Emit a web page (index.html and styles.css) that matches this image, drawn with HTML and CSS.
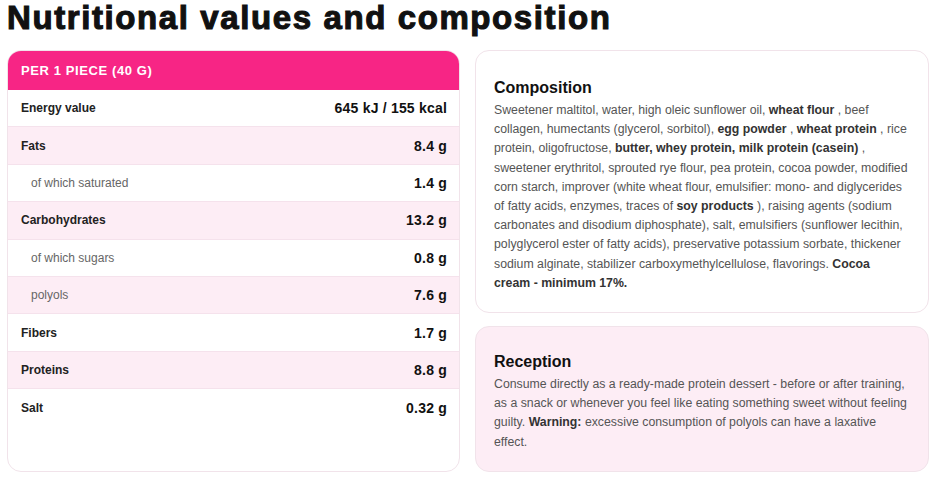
FILE: index.html
```html
<!DOCTYPE html>
<html>
<head>
<meta charset="utf-8">
<link rel="stylesheet" href="styles.css">
</head>
<body>
<h1 class="title">Nutritional values and composition</h1>
<div class="layout">
  <div class="card table-card">
    <div class="table-head">PER 1 PIECE (40 G)</div>
    <div class="row"><span class="label">Energy value</span><span class="value">645 kJ / 155 kcal</span></div>
    <div class="row alt"><span class="label">Fats</span><span class="value">8.4 g</span></div>
    <div class="row sub"><span class="label">of which saturated</span><span class="value">1.4 g</span></div>
    <div class="row alt"><span class="label">Carbohydrates</span><span class="value">13.2 g</span></div>
    <div class="row sub"><span class="label">of which sugars</span><span class="value">0.8 g</span></div>
    <div class="row alt sub"><span class="label">polyols</span><span class="value">7.6 g</span></div>
    <div class="row"><span class="label">Fibers</span><span class="value">1.7 g</span></div>
    <div class="row alt"><span class="label">Proteins</span><span class="value">8.8 g</span></div>
    <div class="row last"><span class="label">Salt</span><span class="value">0.32 g</span></div>
  </div>
  <div class="side">
    <div class="card info-card">
      <h2 class="info-title">Composition</h2>
      <p class="info-text">Sweetener maltitol, water, high oleic sunflower oil, <b>wheat flour</b> , beef<br>collagen, humectants (glycerol, sorbitol), <b>egg powder</b> , <b>wheat protein</b> , rice<br>protein, oligofructose, <b>butter, whey protein, milk protein (casein)</b> ,<br>sweetener erythritol, sprouted rye flour, pea protein, cocoa powder, modified<br>corn starch, improver (white wheat flour, emulsifier: mono- and diglycerides<br>of fatty acids, enzymes, traces of <b>soy products</b> ), raising agents (sodium<br>carbonates and disodium diphosphate), salt, emulsifiers (sunflower lecithin,<br>polyglycerol ester of fatty acids), preservative potassium sorbate, thickener<br>sodium alginate, stabilizer carboxymethylcellulose, flavorings. <b>Cocoa<br>cream - minimum 17%.</b></p>
    </div>
    <div class="card info-card pink">
      <h2 class="info-title">Reception</h2>
      <p class="info-text">Consume directly as a ready-made protein dessert - before or after training,<br>as a snack or whenever you feel like eating something sweet without feeling<br>guilty. <b>Warning:</b> excessive consumption of polyols can have a laxative<br>effect.</p>
    </div>
  </div>
</div>
</body>
</html>
```
FILE: styles.css
```css
html, body {
  margin: 0;
  padding: 0;
  background: #ffffff;
}
body {
  padding: 0 8px 0 7px;
  font-family: "Liberation Sans", Arial, sans-serif;
}
.title {
  margin: 0;
  height: 36px;
  font-size: 33px;
  line-height: 36px;
  font-weight: 700;
  color: #111111;
  letter-spacing: 1.6px;
  white-space: nowrap;
  -webkit-text-stroke: 1.1px #111111;
}
.layout {
  margin-top: 14px;
  display: grid;
  grid-template-columns: 453px 454px;
  column-gap: 15px;
  height: 422px;
}
.card {
  border: 1px solid #f1e3ea;
  border-radius: 14px;
  background: #ffffff;
  overflow: hidden;
  box-sizing: border-box;
}
.table-card {
  display: flex;
  flex-direction: column;
}
.table-head {
  background: #f72585;
  color: #ffffff;
  font-weight: 700;
  font-size: 13px;
  height: 39px;
  display: flex;
  align-items: center;
  padding-left: 13px;
  letter-spacing: 0.6px;
}
.row {
  height: 37.4px;
  box-sizing: border-box;
  display: flex;
  justify-content: space-between;
  align-items: center;
  padding: 0 12px 0 13px;
  border-bottom: 1px solid #f5e2ec;
  font-size: 12px;
}
.row.last {
  border-bottom: none;
}
.row.alt {
  background: #fdedf5;
}
.label {
  font-weight: 700;
  color: #222222;
}
.row.sub .label {
  font-weight: 400;
  color: #666666;
  padding-left: 10px;
}
.value {
  font-weight: 700;
  color: #111111;
  font-size: 14px;
  letter-spacing: 0.2px;
}
.side {
  display: flex;
  flex-direction: column;
  gap: 13px;
}
.info-card {
  padding: 28px 8px 0 18px;
}
.info-card:first-child {
  height: 263px;
}
.info-card.pink {
  flex: 1;
  background: #fdedf5;
  padding-top: 26px;
}
.info-title {
  margin: 0 0 4px 0;
  font-size: 16px;
  line-height: 18px;
  font-weight: 700;
  color: #111111;
}
.info-text {
  margin: 0;
  font-size: 12.3px;
  line-height: 19.2px;
  color: #555555;
  white-space: nowrap;
}
.info-text b {
  color: #333333;
}
```
